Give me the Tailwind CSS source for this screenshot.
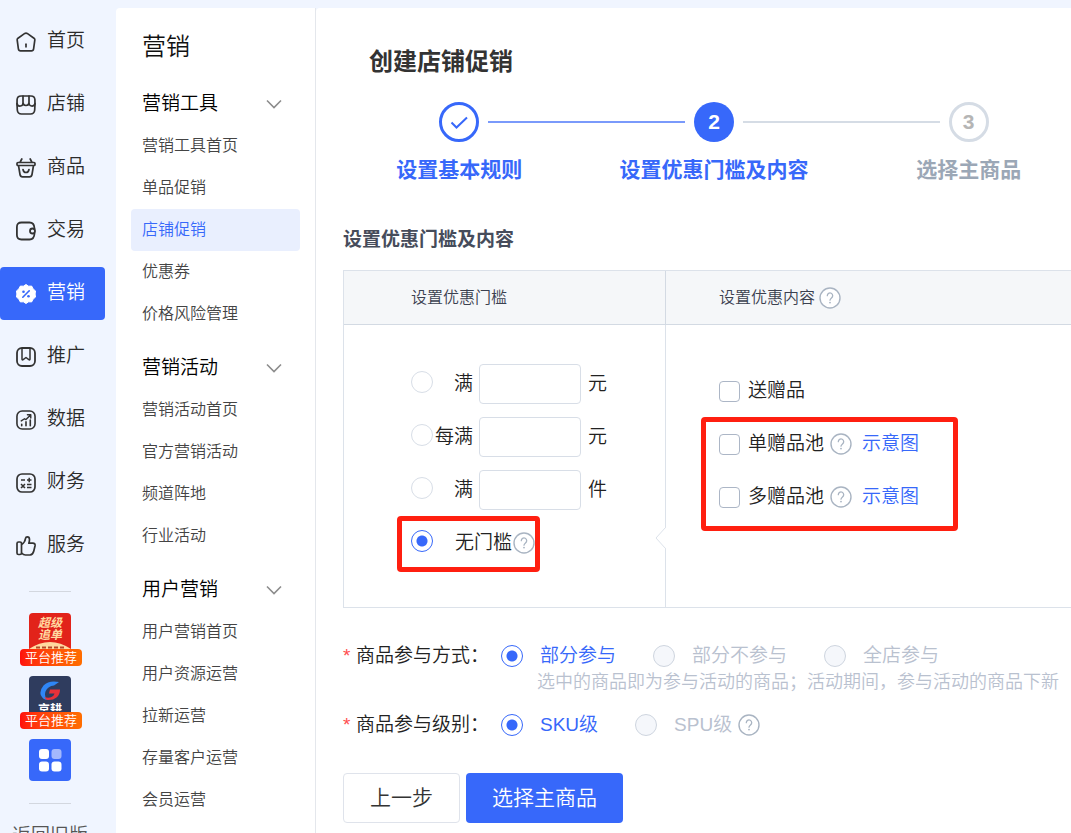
<!DOCTYPE html>
<html lang="zh-CN">
<head>
  <meta charset="UTF-8" />
  <title>创建店铺促销</title>
  <meta name="viewport" content="width=device-width, initial-scale=1" />
  <script src="https://cdn.jsdelivr.net/npm/@tailwindcss/browser@4"></script>
</head>
<body class="bg-[#f0f5ff] font-['Liberation_Sans','Noto_Sans_CJK_SC',sans-serif] font-[350] text-[#222] h-screen overflow-hidden">
  <!-- shared icons -->
  <svg class="hidden">
    <symbol id="help" viewBox="0 0 22 22">
      <circle cx="11" cy="11" r="10" fill="#fff" stroke="#a9b4c2" stroke-width="1.4" />
      <path d="M8.3 8.7a2.7 2.7 0 1 1 4.2 2.2c-.9.7-1.5 1.2-1.5 2.3" fill="none" stroke="#a9b4c2" stroke-width="1.3" stroke-linecap="round" />
      <circle cx="11" cy="15.6" r=".9" fill="#a9b4c2" />
    </symbol>
    <symbol id="chevron" viewBox="0 0 16 10">
      <path d="M1 1.5l7 7 7-7" fill="none" stroke="#8c8c8c" stroke-width="1.6" />
    </symbol>
  </svg>

  <div class="flex h-full">
    <!-- Main nav -->
    <aside class="w-[116px] shrink-0 pt-[15px] overflow-hidden">
      <nav class="w-[105px] flex flex-col gap-[10px] text-[19px] text-[#2b2b2b]">
        <a href="#" class="h-[53px] pl-4 flex items-center gap-[11px]">
          <svg class="w-5 h-5" viewBox="0 0 20 20" fill="none" stroke="#333" stroke-width="1.7" stroke-linecap="round" stroke-linejoin="round"><path d="M8.8 1.4L2 6.2Q1 7 1.2 8.2l1.2 8.6Q2.7 18.8 4.5 18.8h11Q17.3 18.8 17.6 16.8l1.200-8.600Q19 7 18 6.200L11.200 1.400Q10 .7 8.800 1.400z" /><path d="M10 12.200v2.600" /></svg>
          首页
        </a>
        <a href="#" class="h-[53px] pl-4 flex items-center gap-[11px]">
          <svg class="w-5 h-5" viewBox="0 0 20 20" fill="none" stroke="#333" stroke-width="1.7" stroke-linecap="round" stroke-linejoin="round"><path d="M5 1h10q3.600 0 3.900 3.500l.1 4.500-.3 6q-.4 4-4.200 4h-9q-3.800 0-4.200-4L1 9l.1-4.500Q1.400 1 5 1z" /><path d="M7 1v6.500a3 3 0 0 1-6 1M7 7.500a3 3 0 0 0 6 0V1M13 7.500a3 3 0 0 0 6 1" /></svg>
          店铺
        </a>
        <a href="#" class="h-[53px] pl-4 flex items-center gap-[11px]">
          <svg class="w-5 h-5" viewBox="0 0 20 20" fill="none" stroke="#333" stroke-width="1.7" stroke-linecap="round" stroke-linejoin="round"><path d="M5.800 1L4.200 4M14.200 1l1.600 3M2 4.500h16q1 0 1 1v1q0 1-1 1H2q-1 0-1-1v-1q0-1 1-1zM2.500 7.500l1.500 9q.4 2.300 2.500 2.300h7q2.100 0 2.500-2.300l1.500-9" /><path d="M7 11.500q.5 3 3 3t3-3" /></svg>
          商品
        </a>
        <a href="#" class="h-[53px] pl-4 flex items-center gap-[11px]">
          <svg class="w-5 h-5" viewBox="0 0 20 20" fill="none" stroke="#333" stroke-width="1.8" stroke-linecap="round" stroke-linejoin="round"><path d="M18.500 7.500Q18.300 1.500 13.500 1.500H5.500Q.9 1.500.9 6v8Q.9 18.500 5.500 18.500h8q4.700 0 5-6" /><circle cx="16.500" cy="10" r="2.500" /></svg>
          交易
        </a>
        <a href="#" class="h-[53px] pl-4 flex items-center gap-[11px] bg-[#3768fa] text-white rounded">
          <svg class="w-5 h-5" viewBox="0 0 20 20" fill="none"><path d="M10 .5l2.600 1.700 3.100-.1 1.400 2.800 2.400 2-.4 3.100.4 3.100-2.400 2-1.400 2.800-3.100-.1L10 19.500l-2.600-1.700-3.100.1-1.400-2.800-2.400-2 .4-3.100-.4-3.100 2.400-2 1.400-2.800 3.100.1z" fill="#fff" stroke="#fff" stroke-linejoin="round" /><path d="M6.800 13.200l6.400-6.400" stroke="#3768fa" stroke-width="1.600" stroke-linecap="round" /><circle cx="7.500" cy="7.700" r="1.300" fill="#3768fa" /><circle cx="12.500" cy="12.300" r="1.300" fill="#3768fa" /></svg>
          营销
        </a>
        <a href="#" class="h-[53px] pl-4 flex items-center gap-[11px]">
          <svg class="w-5 h-5" viewBox="0 0 20 20" fill="none" stroke="#333" stroke-width="1.8" stroke-linejoin="round"><rect x="1" y="1" width="18" height="18" rx="5" /><path d="M6 1.500v10.500q0 1.400 1.200.6L10 10.500l2.800 2.100q1.200.8 1.200-.6V1.500" stroke-width="1.500" /></svg>
          推广
        </a>
        <a href="#" class="h-[53px] pl-4 flex items-center gap-[11px]">
          <svg class="w-5 h-5" viewBox="0 0 21 21" fill="none" stroke="#333" stroke-width="1.700" stroke-linecap="round" stroke-linejoin="round"><rect x="1" y="1" width="19" height="19" rx="5.500" /><path d="M6 15v1.500M10.500 12.500v4M15 10.500v6" /><path d="M5.500 11.500l3.500-2.300 1.500.8L15 5.500M12 5h3.500v3.500" stroke-width="1.500" /></svg>
          数据
        </a>
        <a href="#" class="h-[53px] pl-4 flex items-center gap-[11px]">
          <svg class="w-5 h-5" viewBox="0 0 20 20" fill="none" stroke="#333" stroke-width="1.700"><rect x="1" y="1" width="18" height="18" rx="5" /><path d="M5 7h4M11 7h4.500M13.200 4.800v4.500M11 11.500h4.500M11 14.500h4.500M5 11l4 4M9 11l-4 4" stroke-width="1.500" /></svg>
          财务
        </a>
        <a href="#" class="h-[53px] pl-4 flex items-center gap-[11px]">
          <svg class="w-5 h-5" viewBox="0 0 20 20" fill="none" stroke="#333" stroke-width="1.700" stroke-linejoin="round"><path d="M2.500 6H4q1.500 0 1.500 1.500v9.500q0 1.500-1.500 1.500H2.500Q1 18.500 1 17V7.500Q1 6 2.500 6z" /><path d="M5.500 8.500Q9 6.500 9.500 2.500 9.800.9 11.300.9q2.200 0 2.200 2.600 0 2-.7 3.700h4q2.700 0 2.200 2.800l-1.200 5q-.8 3.500-3.800 4H9.500q-2 0-4-2" /></svg>
          服务
        </a>
      </nav>

      <div class="w-[42px] ml-[29px] mt-[19px] border-t border-[#d3d7df]"></div>

      <!-- Recommended apps -->
      <div class="w-[60px] ml-5 mt-[21px] flex flex-col items-center gap-[21px]">
        <a href="#" class="relative block w-[42px] h-[42px] rounded bg-[#e2231a]">
          <span class="absolute top-1 inset-x-0 text-center text-[12px] leading-[12px] font-bold italic text-[#ffd9a0]">超级<br />追单</span>
          <svg class="absolute left-0 top-[28px] w-[42px] h-[8px]" viewBox="0 0 42 8"><path d="M0 8Q21-6 42 8z" fill="#ffd9a0" /><path d="M7 6.500h28" stroke="#b5482a" stroke-width="2" stroke-dasharray="4 2" /></svg>
          <span class="absolute -left-[9px] top-9 w-[62px] h-[17px] rounded bg-linear-to-r from-[#ff0d0d] to-[#ff6d00] text-white text-[13px] leading-[17px] text-center">平台推荐</span>
        </a>
        <a href="#" class="relative block w-[42px] h-[42px] rounded bg-[#2f3c5e]">
          <svg class="absolute left-[11px] top-[5px] w-5 h-5" viewBox="0 0 20 20"><path d="M19 1Q9-1 3.500 4.500-1 10 1 14.500q2 4 6 4.500Q4 15 5.500 10.500 8 5 14 4.500z" fill="#2f86f6" /><path d="M10 8.500h10q0 5-3.500 8T7 19q-2-1-2.500-3 4 1.500 7.500-.3 2.300-1.300 2.500-3.200H9z" fill="#e8313a" /></svg>
          <span class="absolute inset-x-0 top-[27px] h-2 overflow-hidden text-white text-[12px] leading-[14px] font-bold text-center">京耕</span>
          <span class="absolute -left-[9px] top-9 w-[62px] h-[17px] rounded bg-linear-to-r from-[#ff0d0d] to-[#ff6d00] text-white text-[13px] leading-[17px] text-center">平台推荐</span>
        </a>
        <a href="#" aria-label="更多应用" class="w-[42px] h-[42px] rounded bg-[#3768fa] grid place-items-center">
          <svg class="w-6 h-6" viewBox="0 0 24 24" fill="#fff"><rect x="1" y="1" width="10" height="10" rx="3" /><rect x="13.500" y="1" width="10" height="10" rx="3" fill="#a3b8fd" /><rect x="1" y="13.500" width="10" height="10" rx="3" /><rect x="13.500" y="13.500" width="10" height="10" rx="3" /></svg>
        </a>
      </div>

      <div class="w-[42px] ml-[29px] mt-[22px] border-t border-[#d3d7df]"></div>
      <a href="#" class="block ml-3 mt-[18px] text-[19px] leading-7 text-[#555]">返回旧版</a>
    </aside>

    <!-- Sub nav -->
    <aside class="w-[200px] shrink-0 mt-2 bg-white border-r border-[#e4e7ec] rounded-tl overflow-hidden px-[15px]">
      <h1 class="mt-[23px] pl-[11px] text-2xl leading-8 text-[#111]">营销</h1>
      <nav class="mt-5 text-base text-[#444]">
        <button class="w-full h-[42px] pl-[11px] pr-[18px] flex items-center justify-between text-[19px] text-black">营销工具<svg class="w-4 h-[10px]"><use href="#chevron" /></svg></button>
        <a href="#" class="h-[42px] pl-[11px] flex items-center">营销工具首页</a>
        <a href="#" class="h-[42px] pl-[11px] flex items-center">单品促销</a>
        <a href="#" class="h-[42px] pl-[11px] flex items-center rounded bg-[#e9effe] text-[#3768fa]">店铺促销</a>
        <a href="#" class="h-[42px] pl-[11px] flex items-center">优惠券</a>
        <a href="#" class="h-[42px] pl-[11px] flex items-center">价格风险管理</a>

        <button class="w-full h-[42px] mt-3 pl-[11px] pr-[18px] flex items-center justify-between text-[19px] text-black">营销活动<svg class="w-4 h-[10px]"><use href="#chevron" /></svg></button>
        <a href="#" class="h-[42px] pl-[11px] flex items-center">营销活动首页</a>
        <a href="#" class="h-[42px] pl-[11px] flex items-center">官方营销活动</a>
        <a href="#" class="h-[42px] pl-[11px] flex items-center">频道阵地</a>
        <a href="#" class="h-[42px] pl-[11px] flex items-center">行业活动</a>

        <button class="w-full h-[42px] mt-3 pl-[11px] pr-[18px] flex items-center justify-between text-[19px] text-black">用户营销<svg class="w-4 h-[10px]"><use href="#chevron" /></svg></button>
        <a href="#" class="h-[42px] pl-[11px] flex items-center">用户营销首页</a>
        <a href="#" class="h-[42px] pl-[11px] flex items-center">用户资源运营</a>
        <a href="#" class="h-[42px] pl-[11px] flex items-center">拉新运营</a>
        <a href="#" class="h-[42px] pl-[11px] flex items-center">存量客户运营</a>
        <a href="#" class="h-[42px] pl-[11px] flex items-center">会员运营</a>
      </nav>
    </aside>

    <!-- Content -->
    <main class="flex-1 min-w-0 mt-2 bg-white rounded-tl overflow-hidden pt-[38px] pl-[27px]">
      <h2 class="pl-[26px] text-2xl leading-8 font-bold text-[#333]">创建店铺促销</h2>

      <ol class="-ml-[11px] mt-6 min-w-[764px] grid grid-cols-3 text-[21px] leading-7 font-bold text-center text-[#3768fa]">
        <li>
          <div class="flex items-center gap-[9px]">
            <span class="flex-1"></span>
            <span class="w-10 h-10 rounded-full border-3 border-[#3768fa] grid place-items-center">
              <svg class="w-5 h-5" viewBox="0 0 20 20" fill="none" stroke="#3768fa" stroke-width="2"><path d="M2.500 10.500l5 5L18 5.500" /></svg>
            </span>
            <span class="flex-1 h-[2px] bg-[#7a9afb]"></span>
          </div>
          <p class="mt-[14px]">设置基本规则</p>
        </li>
        <li>
          <div class="flex items-center gap-[9px]">
            <span class="flex-1 h-[2px] bg-[#7a9afb]"></span>
            <span class="w-10 h-10 rounded-full bg-[#3768fa] text-white grid place-items-center">2</span>
            <span class="flex-1 h-[2px] bg-[#d5dce5]"></span>
          </div>
          <p class="mt-[14px]">设置优惠门槛及内容</p>
        </li>
        <li class="text-[#9ba7b6]">
          <div class="flex items-center gap-[9px]">
            <span class="flex-1 h-[2px] bg-[#d5dce5]"></span>
            <span class="w-10 h-10 rounded-full border-3 border-[#d5dce5] text-[#b5b5b5] grid place-items-center">3</span>
            <span class="flex-1"></span>
          </div>
          <p class="mt-[14px]">选择主商品</p>
        </li>
      </ol>

      <form>
        <h3 class="mt-[42px] text-[19px] leading-7 font-bold text-[#464c5b]">设置优惠门槛及内容</h3>

        <table class="mt-4 w-full table-fixed border-separate border-spacing-0 border-l border-y border-[#dce2ea]">
          <thead>
            <tr class="bg-[#f5f7f9] text-base text-[#3b4150]">
              <th class="w-[321px] h-[54px] pl-[67px] text-left font-[350] border-b border-[#d3dae3]">设置优惠门槛</th>
              <th class="h-[54px] pl-[53px] text-left font-[350] border-l border-b border-[#d3dae3]">
                <span class="flex items-center gap-1">设置优惠内容<svg class="w-[22px] h-[22px]"><use href="#help" /></svg></span>
              </th>
            </tr>
          </thead>
          <tbody class="text-[19px]">
            <tr>
              <td class="relative align-top pt-[39px] pb-11 pl-[67px]">
                <div class="flex flex-col gap-[13px]">
                  <div class="h-10 flex items-center">
                    <input type="radio" id="t1" name="threshold" class="appearance-none w-[22px] h-[22px] mb-1 rounded-full border border-[#d8dee7] bg-white" />
                    <label for="t1" class="w-10 text-right">满</label>
                    <input type="text" aria-label="满元金额" class="w-[102px] h-10 ml-1.5 mr-[7px] px-2 rounded border border-[#d8dee7]" />
                    <span>元</span>
                  </div>
                  <div class="h-10 flex items-center">
                    <input type="radio" id="t2" name="threshold" class="appearance-none w-[22px] h-[22px] mb-1 rounded-full border border-[#d8dee7] bg-white" />
                    <label for="t2" class="w-10 text-right">每满</label>
                    <input type="text" aria-label="每满元金额" class="w-[102px] h-10 ml-1.5 mr-[7px] px-2 rounded border border-[#d8dee7]" />
                    <span>元</span>
                  </div>
                  <div class="h-10 flex items-center">
                    <input type="radio" id="t3" name="threshold" class="appearance-none w-[22px] h-[22px] mb-1 rounded-full border border-[#d8dee7] bg-white" />
                    <label for="t3" class="w-10 text-right">满</label>
                    <input type="text" aria-label="满件数量" class="w-[102px] h-10 ml-1.5 mr-[7px] px-2 rounded border border-[#d8dee7]" />
                    <span>件</span>
                  </div>
                  <div class="h-10 flex items-center">
                    <input type="radio" id="t4" name="threshold" checked class="appearance-none w-[22px] h-[22px] mb-1 rounded-full border border-[#3768fa] bg-[radial-gradient(circle,#3768fa_5px,#fff_6px)]" />
                    <label for="t4" class="ml-[22px]">无门槛</label>
                    <svg class="w-[22px] h-[22px] ml-px"><use href="#help" /></svg>
                  </div>
                </div>
                <div class="absolute left-[53px] top-[191px] w-[143px] h-14 rounded border-5 border-[#ff1f10] pointer-events-none"></div>
              </td>
              <td class="relative align-top pt-[46px] pl-[53px] border-l border-[#dce2ea]">
                <svg class="absolute -left-[11px] top-[202px] w-[12px] h-[22px]" viewBox="0 0 12 22"><path d="M11.500 0L1 11l10.500 11" fill="#fff" /><path d="M11.500 1v20" stroke="#fff" stroke-width="2" /><path d="M10.500 .5L1 11l9.500 10.500" fill="none" stroke="#dce2ea" /></svg>
                <div class="flex flex-col gap-[13px]">
                  <div class="h-10 flex items-center">
                    <input type="checkbox" id="g1" class="appearance-none w-[21px] h-[21px] rounded border border-[#acb6c6] bg-white" />
                    <label for="g1" class="ml-2">送赠品</label>
                  </div>
                  <div class="h-10 flex items-center">
                    <input type="checkbox" id="g2" class="appearance-none w-[21px] h-[21px] rounded border border-[#acb6c6] bg-white" />
                    <label for="g2" class="ml-2">单赠品池</label>
                    <svg class="w-[22px] h-[22px] ml-1.5"><use href="#help" /></svg>
                    <a href="#" class="ml-2.5 text-[#3768fa]">示意图</a>
                  </div>
                  <div class="h-10 flex items-center">
                    <input type="checkbox" id="g3" class="appearance-none w-[21px] h-[21px] rounded border border-[#acb6c6] bg-white" />
                    <label for="g3" class="ml-2">多赠品池</label>
                    <svg class="w-[22px] h-[22px] ml-1.5"><use href="#help" /></svg>
                    <a href="#" class="ml-2.5 text-[#3768fa]">示意图</a>
                  </div>
                </div>
                <div class="absolute left-[35px] top-[92px] w-[257px] h-[114px] rounded border-5 border-[#ff1f10] pointer-events-none"></div>
              </td>
            </tr>
          </tbody>
        </table>

        <div class="mt-[34px] flex text-[19px] leading-7 whitespace-nowrap" role="radiogroup" aria-label="商品参与方式">
          <span class="w-[13px] shrink-0 text-[#ff4d4f]">*</span>
          <span class="w-[145px] shrink-0">商品参与方式：</span>
          <div>
            <div class="flex items-center">
              <input type="radio" id="m1" name="mode" checked class="appearance-none w-[22px] h-[22px] rounded-full border border-[#3768fa] bg-[radial-gradient(circle,#3768fa_5px,#fff_6px)]" />
              <label for="m1" class="ml-[17px] mr-[37px] text-[#3768fa]">部分参与</label>
              <input type="radio" id="m2" name="mode" disabled class="appearance-none w-[22px] h-[22px] rounded-full border border-[#ced5df] bg-[#f5f7fb]" />
              <label for="m2" class="ml-[17px] mr-[37px] text-[#b9c1cf]">部分不参与</label>
              <input type="radio" id="m3" name="mode" disabled class="appearance-none w-[22px] h-[22px] rounded-full border border-[#ced5df] bg-[#f5f7fb]" />
              <label for="m3" class="ml-[17px] text-[#b9c1cf]">全店参与</label>
            </div>
            <p class="pl-9 text-lg leading-6 text-[#b9c1cf]">选中的商品即为参与活动的商品；活动期间，参与活动的商品下新</p>
          </div>
        </div>

        <div class="mt-[17px] flex text-[19px] leading-7 whitespace-nowrap" role="radiogroup" aria-label="商品参与级别">
          <span class="w-[13px] shrink-0 text-[#ff4d4f]">*</span>
          <span class="w-[145px] shrink-0">商品参与级别：</span>
          <div class="flex items-center">
            <input type="radio" id="l1" name="level" checked class="appearance-none w-[22px] h-[22px] rounded-full border border-[#3768fa] bg-[radial-gradient(circle,#3768fa_5px,#fff_6px)]" />
            <label for="l1" class="ml-[17px] mr-[37px] text-[#3768fa]">SKU级</label>
            <input type="radio" id="l2" name="level" disabled class="appearance-none w-[22px] h-[22px] rounded-full border border-[#ced5df] bg-[#f5f7fb]" />
            <label for="l2" class="ml-[17px] text-[#b9c1cf]">SPU级</label>
            <svg class="w-[22px] h-[22px] ml-1.5"><use href="#help" /></svg>
          </div>
        </div>

        <div class="mt-[34px] flex gap-[6px] text-[21px]">
          <button type="button" class="h-[50px] px-[26px] rounded border border-[#dfe3eb] bg-white text-[#333]">上一步</button>
          <button type="submit" class="h-[50px] px-[26px] rounded bg-[#3768fa] text-white">选择主商品</button>
        </div>
      </form>
    </main>
  </div>
</body>
</html>
